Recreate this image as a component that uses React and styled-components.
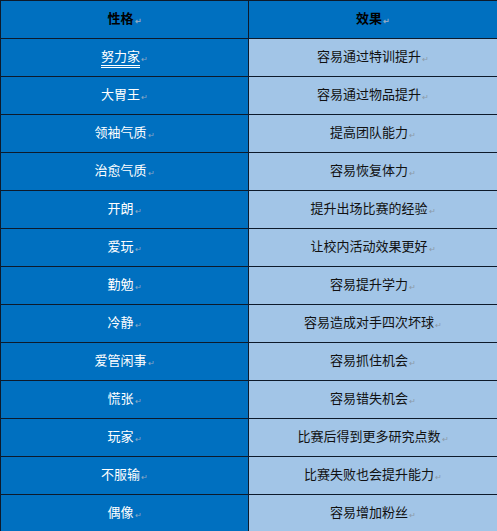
import React from 'react'
import styled, { createGlobalStyle } from 'styled-components'

const rows = [
  ['努力家', '容易通过特训提升', true],
  ['大胃王', '容易通过物品提升'],
  ['领袖气质', '提高团队能力'],
  ['治愈气质', '容易恢复体力'],
  ['开朗', '提升出场比赛的经验'],
  ['爱玩', '让校内活动效果更好'],
  ['勤勉', '容易提升学力'],
  ['冷静', '容易造成对手四次坏球'],
  ['爱管闲事', '容易抓住机会'],
  ['慌张', '容易错失机会'],
  ['玩家', '比赛后得到更多研究点数'],
  ['不服输', '比赛失败也会提升能力'],
  ['偶像', '容易增加粉丝'],
]

const GlobalStyle = createGlobalStyle`
  html, body {
    margin: 0;
    padding: 0;
    background: #ffffff;
    overflow: hidden;
  }
`

const Table = styled.table`
  width: 497px;
  border-collapse: collapse;
  table-layout: fixed;
  font-family: "Microsoft YaHei", "Noto Sans CJK SC", sans-serif;
  font-size: 13px;
`

const Cell = styled.td`
  height: 38px;
  padding: 0;
  box-sizing: border-box;
  border: 1px solid #0d1a2b;
  text-align: center;
  vertical-align: middle;
  background: ${p => (p.$light ? '#a2c5e7' : '#0070c0')};
  color: ${p => (p.$head ? '#000000' : p.$light ? '#111111' : '#ffffff')};
  font-weight: ${p => (p.$head ? 700 : 400)};
  line-height: 16px;
`

const Name = styled.span`
  text-decoration: ${p => (p.$underline ? 'underline double' : 'none')};
  text-underline-offset: 4px;
`

const Mark = styled.span`
  font-size: 8px;
  color: ${p => (p.$onBlue ? '#8fa9c4' : '#8c9aa8')};
  margin-left: 1px;
  vertical-align: -1px;
`

export default function App() {
  return (
    <>
      <GlobalStyle />
      <Table>
        <colgroup>
          <col style={{ width: 248 }} />
          <col style={{ width: 249 }} />
        </colgroup>
        <tbody>
          <tr>
            <Cell $head>性格<Mark $onBlue>↵</Mark></Cell>
            <Cell $head>效果<Mark $onBlue>↵</Mark></Cell>
          </tr>
          {rows.map(([name, effect, underline]) => (
            <tr key={name}>
              <Cell>
                <Name $underline={underline}>{name}</Name>
                <Mark $onBlue>↵</Mark>
              </Cell>
              <Cell $light>
                {effect}
                <Mark>↵</Mark>
              </Cell>
            </tr>
          ))}
        </tbody>
      </Table>
    </>
  )
}
